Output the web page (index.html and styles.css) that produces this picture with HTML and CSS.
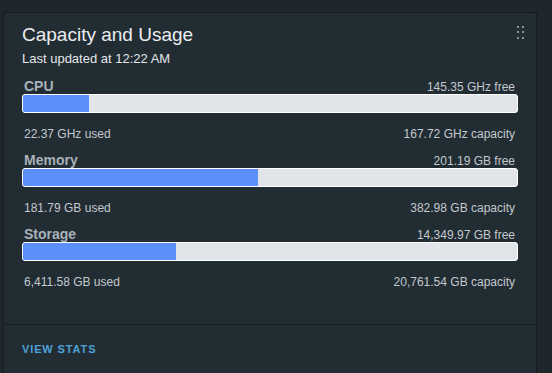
FILE: index.html
```html
<!DOCTYPE html>
<html>
  <head lang="en">
    <meta charset="UTF-8" />
    <title>Capacity and Usage</title>
    <link rel="stylesheet" href="styles.css">
  </head>

  <body>
    <div class="card">
      <span class="drag-handle">
        <svg width="8" height="14" viewBox="0 0 8 14">
          <rect x="0" y="0" width="2" height="2" />
          <rect x="5" y="0" width="2" height="2" />
          <rect x="0" y="5" width="2" height="2" />
          <rect x="5" y="5" width="2" height="2" />
          <rect x="0" y="11" width="2" height="2" />
          <rect x="5" y="11" width="2" height="2" />
        </svg>
      </span>
      <div class="card-body">
        <h3 class="card-title">Capacity and Usage</h3>
        <p class="card-subtitle">Last updated at 12:22 AM</p>

        <div class="usage">
          <div class="usage-row">
            <span class="usage-name">CPU</span>
            <span class="usage-free">145.35 GHz free</span>
          </div>
          <div class="bar"><div class="bar-fill" style="width: 13.3%"></div></div>
          <div class="usage-row usage-foot">
            <span>22.37 GHz used</span>
            <span>167.72 GHz capacity</span>
          </div>
        </div>

        <div class="usage">
          <div class="usage-row">
            <span class="usage-name">Memory</span>
            <span class="usage-free">201.19 GB free</span>
          </div>
          <div class="bar"><div class="bar-fill" style="width: 47.5%"></div></div>
          <div class="usage-row usage-foot">
            <span>181.79 GB used</span>
            <span>382.98 GB capacity</span>
          </div>
        </div>

        <div class="usage">
          <div class="usage-row">
            <span class="usage-name">Storage</span>
            <span class="usage-free">14,349.97 GB free</span>
          </div>
          <div class="bar"><div class="bar-fill" style="width: 30.9%"></div></div>
          <div class="usage-row usage-foot">
            <span>6,411.58 GB used</span>
            <span>20,761.54 GB capacity</span>
          </div>
        </div>
      </div>
      <div class="card-footer">
        <a href="javascript:void(0);" class="card-link">VIEW STATS</a>
      </div>
    </div>
  </body>
</html>
```

FILE: styles.css
```css
html,
body {
  margin: 0;
  padding: 0;
  height: 100%;
  overflow: hidden;
}

body {
  background: #1f272d;
  font-family: "Liberation Sans", Arial, sans-serif;
}

h3,
p {
  margin: 0;
  padding: 0;
}

.card {
  position: relative;
  box-sizing: border-box;
  width: 534px;
  height: 361px;
  margin: 12px 0 0 3px;
  background: #222c33;
  border: 1px solid #151b1f;
  border-bottom: none;
  border-radius: 3px 3px 0 0;
}

.drag-handle {
  position: absolute;
  top: 13px;
  right: 11px;
  display: block;
  line-height: 0;
}

.drag-handle svg {
  fill: #87929a;
}

.card-body {
  padding: 10px 18px 34px 18px;
}

.card-title {
  font-size: 19px;
  line-height: 24px;
  font-weight: normal;
  color: #eaedf0;
}

.card-subtitle {
  margin-top: 4px;
  font-size: 13px;
  line-height: 16px;
  color: #e3e7ea;
}

.usage {
  margin-top: 10px;
}

.card-subtitle + .usage {
  margin-top: 11px;
}

.usage-row {
  display: flex;
  justify-content: space-between;
  align-items: baseline;
  height: 16px;
  padding: 0 3px 0 2px;
  font-size: 12px;
  line-height: 16px;
  color: #c3c9ce;
}

.usage-name {
  font-size: 14px;
  line-height: 16px;
  font-weight: bold;
  color: #a8b2b9;
}

.usage-foot {
  margin-top: 13px;
}

.bar {
  height: 17px;
  border: 1px solid #ffffff;
  border-radius: 3px;
  background: #e1e5e9;
  overflow: hidden;
}

.bar-fill {
  height: 100%;
  background: #5b8ff9;
}

.card-footer {
  border-top: 1px solid #151b1f;
  padding: 17px 18px 0 18px;
}

.card-link {
  display: block;
  font-size: 11px;
  line-height: 14px;
  font-weight: bold;
  letter-spacing: 0.08em;
  color: #4da2d8;
  text-decoration: none;
}
```
